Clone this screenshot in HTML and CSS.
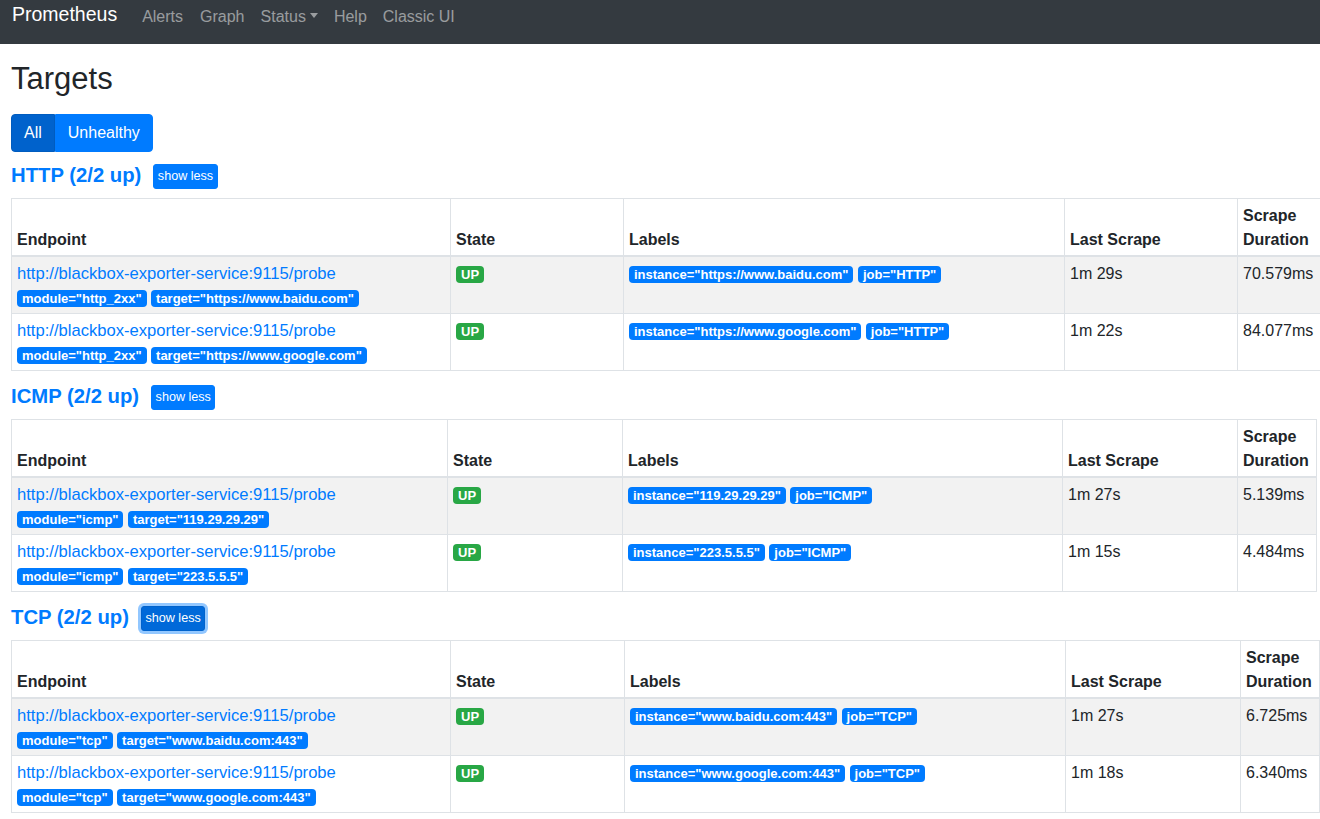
FILE: index.html
```html
<!DOCTYPE html>
<html lang="en">
<head>
<meta charset="utf-8">
<title>Prometheus Time Series Collection and Processing Server</title>
<link rel="stylesheet" href="styles.css">
</head>
<body>
<nav class="navbar">
  <a class="brand" href="#">Prometheus</a>
  <ul class="nav">
    <li><a class="nav-link" href="#">Alerts</a></li>
    <li><a class="nav-link" href="#">Graph</a></li>
    <li><a class="nav-link" href="#">Status<span class="caret"></span></a></li>
    <li><a class="nav-link" href="#">Help</a></li>
    <li><a class="nav-link" href="#">Classic UI</a></li>
  </ul>
</nav>
<main class="container">
  <h2 class="page-title">Targets</h2>
  <div class="btn-group">
    <button class="btn btn-primary active">All</button><button class="btn btn-primary">Unhealthy</button>
  </div>

  <section class="pool">
    <div class="pool-head">
      <a class="pool-title" href="#">HTTP (2/2 up)</a>
      <button class="btn-sm">show less</button>
    </div>
    <table class="targets tbl-http">
      <colgroup><col class="c1"><col class="c2"><col class="c3"><col class="c4"><col class="c5"></colgroup>
      <thead>
        <tr><th>Endpoint</th><th>State</th><th>Labels</th><th>Last Scrape</th><th>Scrape Duration</th></tr>
      </thead>
      <tbody>
        <tr>
          <td><a class="endpoint" href="#">http://blackbox-exporter-service:9115/probe</a><div class="params"><span class="badge badge-primary">module="http_2xx"</span> <span class="badge badge-primary">target="https://www.baidu.com"</span></div></td>
          <td><span class="badge badge-success">UP</span></td>
          <td><span class="badge badge-primary">instance="https://www.baidu.com"</span> <span class="badge badge-primary">job="HTTP"</span></td>
          <td>1m 29s</td>
          <td>70.579ms</td>
        </tr>
        <tr>
          <td><a class="endpoint" href="#">http://blackbox-exporter-service:9115/probe</a><div class="params"><span class="badge badge-primary">module="http_2xx"</span> <span class="badge badge-primary">target="https://www.google.com"</span></div></td>
          <td><span class="badge badge-success">UP</span></td>
          <td><span class="badge badge-primary">instance="https://www.google.com"</span> <span class="badge badge-primary">job="HTTP"</span></td>
          <td>1m 22s</td>
          <td>84.077ms</td>
        </tr>
      </tbody>
    </table>
  </section>

  <section class="pool">
    <div class="pool-head">
      <a class="pool-title" href="#">ICMP (2/2 up)</a>
      <button class="btn-sm">show less</button>
    </div>
    <table class="targets tbl-icmp">
      <colgroup><col class="c1"><col class="c2"><col class="c3"><col class="c4"><col class="c5"></colgroup>
      <thead>
        <tr><th>Endpoint</th><th>State</th><th>Labels</th><th>Last Scrape</th><th>Scrape Duration</th></tr>
      </thead>
      <tbody>
        <tr>
          <td><a class="endpoint" href="#">http://blackbox-exporter-service:9115/probe</a><div class="params"><span class="badge badge-primary">module="icmp"</span> <span class="badge badge-primary">target="119.29.29.29"</span></div></td>
          <td><span class="badge badge-success">UP</span></td>
          <td><span class="badge badge-primary">instance="119.29.29.29"</span> <span class="badge badge-primary">job="ICMP"</span></td>
          <td>1m 27s</td>
          <td>5.139ms</td>
        </tr>
        <tr>
          <td><a class="endpoint" href="#">http://blackbox-exporter-service:9115/probe</a><div class="params"><span class="badge badge-primary">module="icmp"</span> <span class="badge badge-primary">target="223.5.5.5"</span></div></td>
          <td><span class="badge badge-success">UP</span></td>
          <td><span class="badge badge-primary">instance="223.5.5.5"</span> <span class="badge badge-primary">job="ICMP"</span></td>
          <td>1m 15s</td>
          <td>4.484ms</td>
        </tr>
      </tbody>
    </table>
  </section>

  <section class="pool">
    <div class="pool-head">
      <a class="pool-title" href="#">TCP (2/2 up)</a>
      <button class="btn-sm focused">show less</button>
    </div>
    <table class="targets tbl-tcp">
      <colgroup><col class="c1"><col class="c2"><col class="c3"><col class="c4"><col class="c5"></colgroup>
      <thead>
        <tr><th>Endpoint</th><th>State</th><th>Labels</th><th>Last Scrape</th><th>Scrape Duration</th></tr>
      </thead>
      <tbody>
        <tr>
          <td><a class="endpoint" href="#">http://blackbox-exporter-service:9115/probe</a><div class="params"><span class="badge badge-primary">module="tcp"</span> <span class="badge badge-primary">target="www.baidu.com:443"</span></div></td>
          <td><span class="badge badge-success">UP</span></td>
          <td><span class="badge badge-primary">instance="www.baidu.com:443"</span> <span class="badge badge-primary">job="TCP"</span></td>
          <td>1m 27s</td>
          <td>6.725ms</td>
        </tr>
        <tr>
          <td><a class="endpoint" href="#">http://blackbox-exporter-service:9115/probe</a><div class="params"><span class="badge badge-primary">module="tcp"</span> <span class="badge badge-primary">target="www.google.com:443"</span></div></td>
          <td><span class="badge badge-success">UP</span></td>
          <td><span class="badge badge-primary">instance="www.google.com:443"</span> <span class="badge badge-primary">job="TCP"</span></td>
          <td>1m 18s</td>
          <td>6.340ms</td>
        </tr>
      </tbody>
    </table>
  </section>
</main>
</body>
</html>
```
FILE: styles.css
```css
* { box-sizing: border-box; }

body {
  margin: 0;
  overflow-x: hidden;
  font-family: "Liberation Sans", Arial, sans-serif;
  font-size: 16px;
  line-height: 24px;
  color: #212529;
  background: #fff;
}

a { color: #007bff; text-decoration: none; }

/* navbar */
.navbar {
  display: flex;
  align-items: flex-start;
  height: 44px;
  padding: 0 12px;
  background: #343a40;
}
.brand {
  margin-top: 2px;
  margin-right: 17px;
  font-size: 19.5px;
  line-height: 24px;
  color: #fff;
}
.nav {
  display: flex;
  margin: 0;
  padding: 0;
  list-style: none;
}
.nav-link {
  display: block;
  padding: 5px 8px 0;
  font-size: 16px;
  line-height: 24px;
  color: rgba(255, 255, 255, 0.5);
}
.nav li:nth-child(2) .nav-link { padding-left: 9px; }
.caret {
  display: inline-block;
  margin-left: 4px;
  vertical-align: 4px;
  border-top: 5px solid;
  border-left: 4.5px solid transparent;
  border-right: 4.5px solid transparent;
}

/* content */
.container {
  padding: 0 0 0 11px;
}
.page-title {
  margin: 16px 0 0;
  font-size: 31px;
  line-height: 38px;
  font-weight: 400;
}

.btn-group {
  display: flex;
  margin-top: 16px;
}
.btn {
  font-family: inherit;
  font-size: 16px;
  line-height: 24px;
  padding: 6px 12px;
  border: 1px solid #007bff;
  background: #007bff;
  color: #fff;
  cursor: pointer;
}
.btn:first-child { border-radius: 4px 0 0 4px; }
.btn:last-child { border-radius: 0 4px 4px 0; }
.btn.active {
  background: #0062cc;
  border-color: #005cbf;
}

.pool-head {
  display: flex;
  align-items: flex-start;
  margin-top: 13px;
  margin-bottom: 9px;
}
.pool:first-of-type .pool-head { margin-top: 11px; }
.pool-title {
  font-size: 20.3px;
  line-height: 24px;
  font-weight: 700;
  color: #007bff;
}
.btn-sm {
  margin-top: 1px;
  margin-left: 12px;
  height: 25px;
  padding: 4px 3.5px;
  font-family: inherit;
  font-size: 12.6px;
  line-height: 15px;
  color: #fff;
  background: #007bff;
  border: 1px solid #007bff;
  border-radius: 3px;
}
.btn-sm.focused {
  background: #0069d9;
  border-color: #0062cc;
  box-shadow: 0 0 0 3px rgba(38, 143, 255, 0.5);
}

/* tables */
.targets {
  table-layout: fixed;
  border-collapse: collapse;
  font-size: 16px;
  line-height: 24px;
}
.targets th,
.targets td {
  padding: 5px 5px 3px;
  border: 1px solid #dee2e6;
  vertical-align: top;
  text-align: left;
}
.targets th {
  vertical-align: bottom;
  font-weight: 700;
  border-bottom: 2px solid #dee2e6;
}
.targets tbody tr:nth-child(odd) { background: rgba(0, 0, 0, 0.05); }

.tbl-http { width: 1311px; }
.tbl-http .c1 { width: 439px; }
.tbl-http .c2 { width: 173px; }
.tbl-http .c3 { width: 441px; }
.tbl-http .c4 { width: 173px; }
.tbl-http .c5 { width: 85px; }

.tbl-icmp { width: 1305px; }
.tbl-icmp .c1 { width: 436px; }
.tbl-icmp .c2 { width: 175px; }
.tbl-icmp .c3 { width: 440px; }
.tbl-icmp .c4 { width: 175px; }
.tbl-icmp .c5 { width: 79px; }

.tbl-tcp { width: 1308px; }
.tbl-tcp .c1 { width: 439px; }
.tbl-tcp .c2 { width: 174px; }
.tbl-tcp .c3 { width: 441px; }
.tbl-tcp .c4 { width: 175px; }
.tbl-tcp .c5 { width: 79px; }

.endpoint {
  display: block;
  font-size: 16.6px;
  line-height: 24px;
}
.params { line-height: 24px; }

.badge {
  display: inline-block;
  padding: 2px 5px;
  font-size: 13px;
  line-height: 13px;
  font-weight: 700;
  color: #fff;
  border-radius: 4px;
  white-space: nowrap;
}
.badge-primary { background: #007bff; }
.badge-success { background: #28a745; }
```
